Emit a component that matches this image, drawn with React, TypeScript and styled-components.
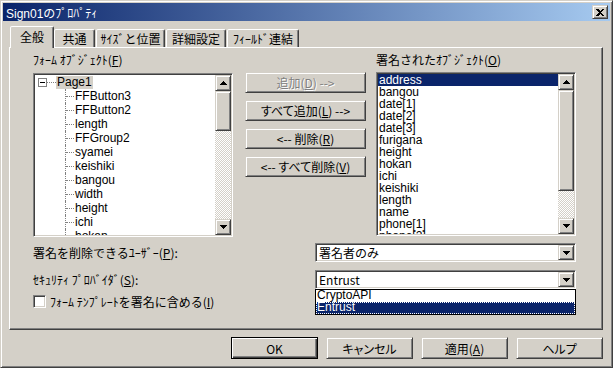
import React from "react";
import styled, { createGlobalStyle, css } from "styled-components";

const FACE = "#d4d0c8";
const SHADOW = "#808080";
const DARK = "#404040";
const SEL = "#0a246a";

const Global = createGlobalStyle`
  html, body { margin: 0; padding: 0; background: ${FACE}; }
  body { font-family: "Liberation Sans", "Noto Sans CJK JP", sans-serif; font-size: 12px; color: #000; }
  * { box-sizing: border-box; }
`;

const raised = css`
  background: ${FACE};
  border: 1px solid;
  border-color: ${FACE} ${DARK} ${DARK} ${FACE};
  box-shadow: inset 1px 1px #fff, inset -1px -1px ${SHADOW};
`;

const sunken = css`
  border: 1px solid;
  border-color: ${SHADOW} #fff #fff ${SHADOW};
  padding: 1px;
  box-shadow: inset 1px 1px ${DARK}, inset -1px -1px ${FACE};
  background: #fff;
`;

const Window = styled.div`
  width: 613px;
  height: 368px;
  background: ${FACE};
  border: 1px solid;
  border-color: ${FACE} ${DARK} ${DARK} ${FACE};
  box-shadow: inset 1px 1px #fff, inset -1px -1px ${SHADOW};
  padding: 2px;
  display: flex;
  flex-direction: column;
`;

const TitleBar = styled.div`
  height: 18px;
  background: linear-gradient(to right, #0a246a, #a6caf0);
  display: flex;
  align-items: center;
  justify-content: space-between;
  padding: 0 2px 0 3px;
  color: #fff;
  font-size: 12px;
`;

const CloseBtn = styled.div`
  ${raised};
  width: 16px;
  height: 14px;
  display: flex;
  align-items: center;
  justify-content: center;
`;

const Content = styled.div`
  flex: 1;
  display: flex;
  flex-direction: column;
  padding: 5px 7px 0 6px;
`;

const TabRow = styled.div`
  display: flex;
  align-items: flex-end;
  height: 21px;
  padding-left: 1px;
  position: relative;
  z-index: 1;
`;

const Tab = styled.div<{ $w: number; $active?: boolean }>`
  width: ${(p) => p.$w}px;
  height: ${(p) => (p.$active ? 22 : 18)}px;
  margin-bottom: ${(p) => (p.$active ? -1 : 0)}px;
  margin-right: ${(p) => (p.$active ? 0 : 1)}px;
  background: ${FACE};
  border: 1px solid;
  border-bottom: none;
  border-color: #fff ${DARK} transparent #fff;
  box-shadow: inset -1px 0 ${SHADOW};
  border-radius: 2px 2px 0 0;
  display: flex;
  align-items: center;
  justify-content: center;
  padding-bottom: ${(p) => (p.$active ? 2 : 0)}px;
  white-space: nowrap;
  font-family: "Noto Sans CJK JP", sans-serif;
  font-size: 12px;
`;

const Panel = styled.div`
  height: 283px;
  border: 1px solid;
  border-color: #fff ${DARK} ${DARK} #fff;
  box-shadow: inset -1px -1px ${SHADOW};
  padding: 5px 0 0 23px;
  display: flex;
  flex-direction: column;
`;

const TopSection = styled.div`
  display: flex;
  align-items: flex-start;
`;

const Column = styled.div`
  width: 200px;
  display: flex;
  flex-direction: column;
`;

const Label = styled.div<{ $gap?: number }>`
  height: 14px;
  line-height: 14px;
  margin-bottom: ${(p) => p.$gap ?? 0}px;
  white-space: nowrap;
  font-family: "Noto Sans CJK JP", sans-serif;
  font-size: 12px;
`;

const Box = styled.div<{ $h: number }>`
  ${sunken};
  height: ${(p) => p.$h}px;
  display: flex;
`;

const BoxBody = styled.div`
  flex: 1;
  overflow: hidden;
`;

const ScrollBar = styled.div`
  width: 16px;
  display: flex;
  flex-direction: column;
  background-color: #fff;
  background-image: repeating-conic-gradient(${FACE} 0 25%, #fff 0 50%);
  background-size: 2px 2px;
`;

const ArrowBtn = styled.div`
  ${raised};
  width: 16px;
  height: 16px;
  flex: none;
  display: flex;
  align-items: center;
  justify-content: center;
`;

const Thumb = styled.div<{ $h: number }>`
  ${raised};
  height: ${(p) => p.$h}px;
  flex: none;
`;

const Track = styled.div`
  flex: 1;
`;

const TreeBody = styled(BoxBody)`
  padding: 0 0 0 3px;
`;

const TreeRow = styled.div<{ $child?: boolean }>`
  height: 14px;
  display: flex;
  align-items: center;
  padding-left: ${(p) => (p.$child ? 27 : 0)}px;
  white-space: nowrap;
`;

const Expander = styled.div`
  width: 9px;
  height: 9px;
  border: 1px solid ${SHADOW};
  background: #fff;
  position: relative;
  flex: none;
  &::after {
    content: "";
    position: absolute;
    left: 1px;
    top: 3px;
    width: 5px;
    height: 1px;
    background: #000;
  }
`;

const HDots = styled.div<{ $w: number }>`
  width: ${(p) => p.$w}px;
  border-top: 1px dotted ${SHADOW};
  flex: none;
`;

const Connector = styled.div`
  width: 9px;
  height: 14px;
  border-left: 1px dotted ${SHADOW};
  position: relative;
  flex: none;
  &::after {
    content: "";
    position: absolute;
    left: 0;
    top: 7px;
    width: 8px;
    border-top: 1px dotted ${SHADOW};
  }
`;

const TreeText = styled.span<{ $sel?: boolean }>`
  line-height: 13px;
  padding: 0 1px;
  background: ${(p) => (p.$sel ? FACE : "transparent")};
`;

const ListRow = styled.div<{ $sel?: boolean }>`
  height: 12px;
  line-height: 12px;
  padding-left: 1px;
  white-space: nowrap;
  background: ${(p) => (p.$sel ? SEL : "transparent")};
  color: ${(p) => (p.$sel ? "#fff" : "#000")};
`;

const Middle = styled.div`
  width: 121px;
  margin: 0 10px 0 12px;
  padding-top: 19px;
  display: flex;
  flex-direction: column;
  gap: 7px;
`;

const Button = styled.div<{ $disabled?: boolean; $w?: number; $h?: number }>`
  ${raised};
  width: ${(p) => (p.$w ? `${p.$w}px` : "100%")};
  height: ${(p) => p.$h ?? 21}px;
  display: flex;
  align-items: center;
  justify-content: center;
  white-space: nowrap;
  font-family: "Noto Sans CJK JP", sans-serif;
  font-size: 12px;
  font-feature-settings: "palt";
  color: ${(p) => (p.$disabled ? SHADOW : "#000")};
  text-shadow: ${(p) => (p.$disabled ? "1px 1px #fff" : "none")};
`;

const DefaultButton = styled(Button)`
  border-color: #000;
  box-shadow: inset 1px 1px #fff, inset -1px -1px ${DARK}, inset -2px -2px ${SHADOW};
`;

const BottomGrid = styled.div`
  margin-top: 6px;
  display: grid;
  grid-template-columns: 282px 261px;
  row-gap: 8px;
`;

const SelectBox = styled.div`
  ${sunken};
  height: 19px;
  display: flex;
  position: relative;
`;

const SelectText = styled.div`
  flex: 1;
  padding-left: 2px;
  line-height: 15px;
  font-family: "Noto Sans CJK JP", sans-serif;
`;

const DropArrow = styled(ArrowBtn)`
  height: 15px;
`;

const DropList = styled.div`
  position: absolute;
  left: -1px;
  right: -1px;
  top: 100%;
  margin-top: 1px;
  border: 1px solid #000;
  background: #fff;
  z-index: 5;
`;

const DropItem = styled.div<{ $sel?: boolean }>`
  height: 12px;
  line-height: 11px;
  padding-left: 1px;
  background: ${(p) => (p.$sel ? SEL : "#fff")};
  color: ${(p) => (p.$sel ? "#fff" : "#000")};
  outline: ${(p) => (p.$sel ? "1px dotted #fff" : "none")};
  outline-offset: -1px;
`;

const RowLabel = styled.div`
  display: flex;
  align-items: center;
  white-space: nowrap;
  font-family: "Noto Sans CJK JP", sans-serif;
`;

const CheckRow = styled.div`
  grid-column: 1 / 2;
  display: flex;
  align-items: center;
  gap: 4px;
  margin-top: -2px;
  height: 13px;
  font-family: "Noto Sans CJK JP", sans-serif;
`;

const CheckBox = styled.div`
  width: 13px;
  height: 13px;
  border: 1px solid;
  border-color: ${SHADOW} #fff #fff ${SHADOW};
  box-shadow: inset 1px 1px ${DARK}, inset -1px -1px ${FACE};
  background: #fff;
  flex: none;
`;

const ButtonRow = styled.div`
  margin-top: 7px;
  display: flex;
  justify-content: flex-end;
  gap: 8px;
`;

const Up = () => (
  <svg width="7" height="4" viewBox="0 0 7 4" shapeRendering="crispEdges">
    <path d="M3 0h1v1h1v1h1v1h1v1H0V3h1V2h1V1h1z" fill="#000" />
  </svg>
);
const Down = () => (
  <svg width="7" height="4" viewBox="0 0 7 4" shapeRendering="crispEdges">
    <path d="M0 0h7v1H6v1H5v1H4v1H3V3H2V2H1V1H0z" fill="#000" />
  </svg>
);

const Scroll = ({ thumb }: { thumb: number }) => (
  <ScrollBar>
    <ArrowBtn><Up /></ArrowBtn>
    <Thumb $h={thumb} />
    <Track />
    <ArrowBtn><Down /></ArrowBtn>
  </ScrollBar>
);

const treeChildren = ["FFButton3", "FFButton2", "length", "FFGroup2", "syamei", "keishiki", "bangou", "width", "height", "ichi", "hokan"];
const signed = ["address", "bangou", "date[1]", "date[2]", "date[3]", "furigana", "height", "hokan", "ichi", "keishiki", "length", "name", "phone[1]", "phone[2]"];

export default function App() {
  return (
    <>
      <Global />
      <Window>
        <TitleBar>
          <span>Sign01のﾌﾟﾛﾊﾟﾃｨ</span>
          <CloseBtn>
            <svg width="8" height="7" viewBox="0 0 8 7" shapeRendering="crispEdges">
              <path d="M0 0h2l2 2 2-2h2L5 3.5 8 7H6L4 5 2 7H0l3-3.5z" fill="#000" />
            </svg>
          </CloseBtn>
        </TitleBar>
        <Content>
          <TabRow>
            <Tab $w={44} $active>全般</Tab>
            <Tab $w={41}>共通</Tab>
            <Tab $w={69}>ｻｲｽﾞと位置</Tab>
            <Tab $w={60}>詳細設定</Tab>
            <Tab $w={72}>ﾌｨｰﾙﾄﾞ連結</Tab>
          </TabRow>
          <Panel>
            <TopSection>
              <Column>
                <Label $gap={6}>ﾌｫｰﾑ ｵﾌﾞｼﾞｪｸﾄ(<u>F</u>)</Label>
                <Box $h={164}>
                  <TreeBody>
                    <TreeRow>
                      <Expander />
                      <HDots $w={9} />
                      <TreeText $sel>Page1</TreeText>
                    </TreeRow>
                    {treeChildren.map((t) => (
                      <TreeRow $child key={t}>
                        <Connector />
                        <TreeText>{t}</TreeText>
                      </TreeRow>
                    ))}
                  </TreeBody>
                  <Scroll thumb={40} />
                </Box>
              </Column>
              <Middle>
                <Button $disabled>追加(<u>D</u>) --&gt;</Button>
                <Button>すべて追加(<u>L</u>) --&gt;</Button>
                <Button>&lt;-- 削除(<u>R</u>)</Button>
                <Button>&lt;-- すべて削除(<u>V</u>)</Button>
              </Middle>
              <Column>
                <Label $gap={5}>署名されたｵﾌﾞｼﾞｪｸﾄ(<u>O</u>)</Label>
                <Box $h={164}>
                  <BoxBody>
                    {signed.map((s, i) => (
                      <ListRow key={s} $sel={i === 0}>{s}</ListRow>
                    ))}
                  </BoxBody>
                  <Scroll thumb={101} />
                </Box>
              </Column>
            </TopSection>
            <BottomGrid>
              <RowLabel>署名を削除できるﾕｰｻﾞｰ(<u>P</u>):</RowLabel>
              <SelectBox>
                <SelectText>署名者のみ</SelectText>
                <DropArrow><Down /></DropArrow>
              </SelectBox>
              <RowLabel>ｾｷｭﾘﾃｨ ﾌﾟﾛﾊﾞｲﾀﾞ(<u>S</u>):</RowLabel>
              <SelectBox>
                <SelectText>Entrust</SelectText>
                <DropArrow><Down /></DropArrow>
                <DropList>
                  <DropItem>CryptoAPI</DropItem>
                  <DropItem $sel>Entrust</DropItem>
                </DropList>
              </SelectBox>
              <CheckRow>
                <CheckBox />
                <span>ﾌｫｰﾑ ﾃﾝﾌﾟﾚｰﾄを署名に含める(<u>I</u>)</span>
              </CheckRow>
            </BottomGrid>
          </Panel>
          <ButtonRow>
            <DefaultButton $w={87} $h={22}>OK</DefaultButton>
            <Button $w={87} $h={22}>キャンセル</Button>
            <Button $w={87} $h={22}>適用(<u>A</u>)</Button>
            <Button $w={87} $h={22}>ヘルプ</Button>
          </ButtonRow>
        </Content>
      </Window>
    </>
  );
}
